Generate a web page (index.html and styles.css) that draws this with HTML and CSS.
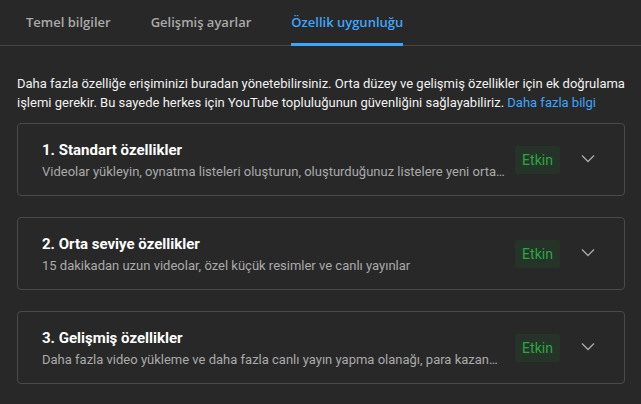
FILE: index.html
```html
<!DOCTYPE html>
<html lang="tr">
<head>
<meta charset="utf-8">
<link rel="stylesheet" href="styles.css">
</head>
<body>
<div class="tabs">
  <div class="tab">Temel bilgiler</div>
  <div class="tab">Gelişmiş ayarlar</div>
  <div class="tab active">Özellik uygunluğu</div>
</div>
<div class="content">
  <p class="intro">Daha fazla özelliğe erişiminizi buradan yönetebilirsiniz. Orta düzey ve gelişmiş özellikler için ek doğrulama işlemi gerekir. Bu sayede herkes için YouTube topluluğunun güvenliğini sağlayabiliriz. <a class="link" href="#">Daha fazla bilgi</a></p>

  <div class="card">
    <div class="card-text">
      <div class="card-title">1. Standart özellikler</div>
      <div class="card-sub">Videolar yükleyin, oynatma listeleri oluşturun, oluşturduğunuz listelere yeni orta düzey özellikler ekleyin</div>
    </div>
    <div class="badge">Etkin</div>
    <svg class="chev" viewBox="0 0 24 24" width="24" height="24"><path d="M6 9.5l6 6 6-6" fill="none" stroke="#aaaaaa" stroke-width="1.3"/></svg>
  </div>

  <div class="card">
    <div class="card-text">
      <div class="card-title">2. Orta seviye özellikler</div>
      <div class="card-sub">15 dakikadan uzun videolar, özel küçük resimler ve canlı yayınlar</div>
    </div>
    <div class="badge">Etkin</div>
    <svg class="chev" viewBox="0 0 24 24" width="24" height="24"><path d="M6 9.5l6 6 6-6" fill="none" stroke="#aaaaaa" stroke-width="1.3"/></svg>
  </div>

  <div class="card">
    <div class="card-text">
      <div class="card-title">3. Gelişmiş özellikler</div>
      <div class="card-sub">Daha fazla video yükleme ve daha fazla canlı yayın yapma olanağı, para kazanma özellikleri ve daha fazlası</div>
    </div>
    <div class="badge">Etkin</div>
    <svg class="chev" viewBox="0 0 24 24" width="24" height="24"><path d="M6 9.5l6 6 6-6" fill="none" stroke="#aaaaaa" stroke-width="1.3"/></svg>
  </div>
</div>
</body>
</html>
```

FILE: styles.css
```css
html, body {
  margin: 0;
  padding: 0;
  background: #282828;
  font-family: Roboto, "Liberation Sans", Arial, sans-serif;
  color: #f1f1f1;
}

.tabs {
  display: flex;
  align-items: flex-start;
  gap: 40px;
  padding-left: 26px;
  height: 45px;
  border-bottom: 1px solid #474747;
}

.tab {
  font-family: "Open Sans", "Noto Sans", sans-serif;
  font-weight: 600;
  font-size: 13px;
  line-height: 20px;
  color: #aaaaaa;
  padding-top: 12px;
  padding-bottom: 11px;
  border-bottom: 3px solid transparent;
  margin-bottom: -1px;
}

.tab.active {
  color: #3ea6ff;
  border-bottom-color: #3ea6ff;
}

.content {
  padding: 0 16px 0 17px;
}

.intro {
  margin: 28px 0 11px;
  font-size: 13px;
  line-height: 19px;
  color: #f1f1f1;
}

.link {
  color: #3ea6ff;
  text-decoration: none;
}

.card {
  display: flex;
  align-items: center;
  height: 71px;
  border: 1px solid #4a4a4a;
  border-radius: 4px;
  padding: 0 24px 0 24px;
  margin-bottom: 21px;
}

.card-text {
  flex: 1;
  min-width: 0;
  margin-right: 8px;
  padding-top: 3px;
}

.card-title {
  font-size: 15px;
  font-weight: 700;
  line-height: 20px;
  color: #ffffff;
}

.card-sub {
  font-size: 13px;
  line-height: 20px;
  margin-top: 2px;
  color: #aaaaaa;
  white-space: nowrap;
  overflow: hidden;
  text-overflow: ellipsis;
}

.badge {
  flex: none;
  width: 45px;
  height: 28px;
  line-height: 28px;
  text-align: center;
  font-size: 14px;
  color: #2ba640;
  background: #263328;
  border-radius: 2px;
}

.chev {
  flex: none;
  margin-left: 16px;
  margin-top: -4px;
}
```
